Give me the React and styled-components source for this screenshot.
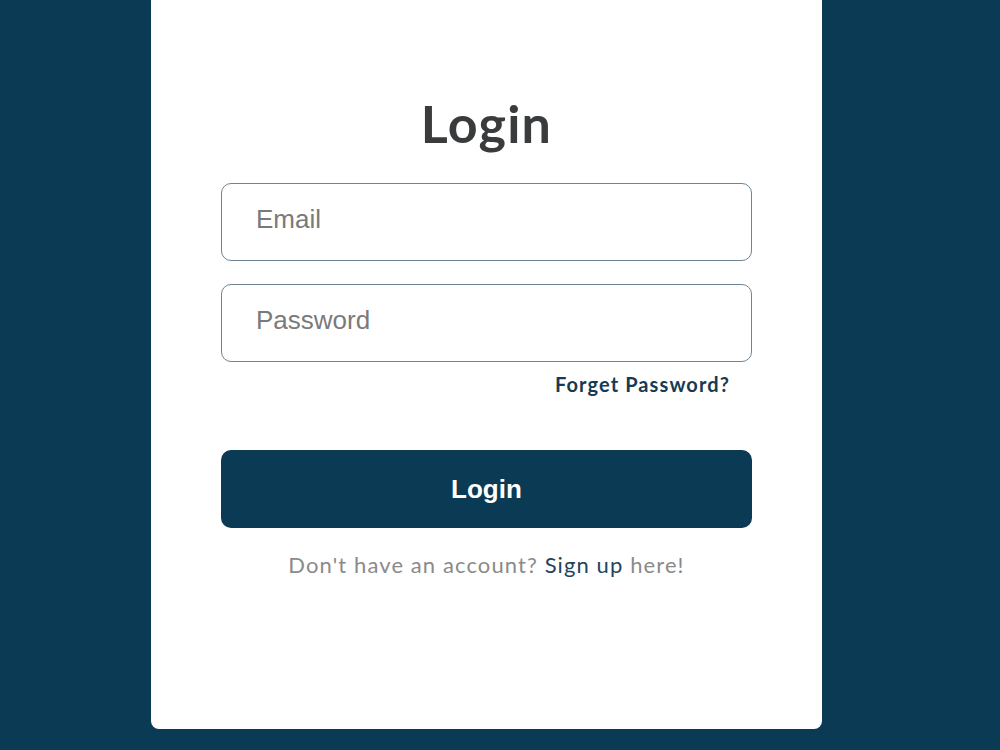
import React from "react";
import styled, { createGlobalStyle } from "styled-components";

const GlobalStyle = createGlobalStyle`
  html, body {
    margin: 0;
    padding: 0;
    background: #0b3a55;
  }
  body {
    font-family: "Liberation Sans", Arial, sans-serif;
  }
`;

const Page = styled.div`
  width: 1000px;
  height: 750px;
  overflow: hidden;
  display: flex;
  align-items: flex-start;
  padding-left: 151px;
  box-sizing: border-box;
`;

const Card = styled.div`
  width: 671px;
  height: 749px;
  margin-top: -20px;
  background: #ffffff;
  border-radius: 8px;
  box-sizing: border-box;
  padding: 113px 70px 0;
  display: flex;
  flex-direction: column;
  align-items: center;
`;

const Title = styled.h1`
  margin: 0;
  font-family: "Lato", sans-serif;
  font-size: 52px;
  font-weight: 700;
  letter-spacing: 1.2px;
  color: #3a3b3d;
  line-height: 60px;
`;

const Form = styled.form`
  width: 100%;
  margin-top: 30px;
  display: flex;
  flex-direction: column;
`;

const Input = styled.input`
  width: 100%;
  height: 78px;
  box-sizing: border-box;
  border: 1px solid #6f8594;
  border-radius: 10px;
  padding: 0 34px 5px;
  font-family: "Liberation Sans", Arial, sans-serif;
  font-size: 26px;
  color: #333;
  outline: none;
  & + & {
    margin-top: 23px;
  }
  &::placeholder {
    color: #7a7a7a;
  }
`;

const ForgetRow = styled.div`
  display: flex;
  justify-content: flex-end;
  padding-right: 22px;
  margin-top: 9px;
`;

const ForgetLink = styled.a`
  font-family: "Lato", sans-serif;
  font-size: 20px;
  font-weight: 700;
  letter-spacing: 1.1px;
  color: #173a54;
  text-decoration: none;
  line-height: 26px;
`;

const SubmitButton = styled.button`
  width: 100%;
  height: 78px;
  margin-top: 53px;
  border: none;
  border-radius: 10px;
  background: #0b3a55;
  color: #ffffff;
  font-family: "Liberation Sans", Arial, sans-serif;
  font-size: 26px;
  font-weight: 700;
  cursor: pointer;
`;

const SignUpText = styled.p`
  margin: 23px 0 0;
  font-family: "Lato", sans-serif;
  font-size: 22px;
  letter-spacing: 1.1px;
  color: #8a8a8a;
`;

const SignUpLink = styled.a`
  color: #22445c;
  text-decoration: none;
`;

const App = () => {
  return (
    <Page>
      <GlobalStyle />
      <Card>
        <Title>Login</Title>
        <Form onSubmit={(e) => e.preventDefault()}>
          <Input type="email" placeholder="Email" />
          <Input type="password" placeholder="Password" />
          <ForgetRow>
            <ForgetLink href="#">Forget Password?</ForgetLink>
          </ForgetRow>
          <SubmitButton type="submit">Login</SubmitButton>
        </Form>
        <SignUpText>
          Don't have an account? <SignUpLink href="#">Sign up</SignUpLink>{" "}
          here!
        </SignUpText>
      </Card>
    </Page>
  );
};

export default App;
